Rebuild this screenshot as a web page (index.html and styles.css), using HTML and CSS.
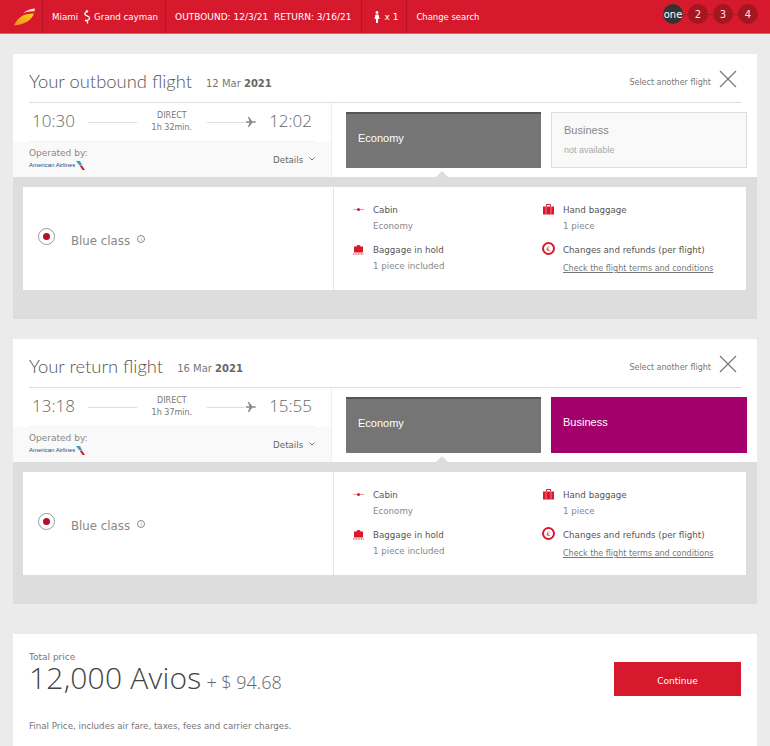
FILE: index.html
```html
<!DOCTYPE html>
<html lang="en">
<head>
    <meta charset="UTF-8">
    <meta name="viewport" content="width=device-width, initial-scale=1.0">
    <title>Select your flight</title>
    <link rel="stylesheet" href="styles.css">
</head>
<body>
    <div class="topbar">
        <div class="topbar-cell logo-cell">
            <svg width="22" height="18" viewBox="0 0 22 18">
                <defs>
                    <linearGradient id="wing" x1="0" y1="1" x2="1" y2="0">
                        <stop offset="0" stop-color="#f08a1d"/>
                        <stop offset="1" stop-color="#fcd116"/>
                    </linearGradient>
                </defs>
                <path d="M0 17.500C4 9 10 5.500 20 5.600C18 12 10 17 0 17.500Z" fill="url(#wing)"/>
                <path d="M9 5.500C12 2.500 16 .8 21 .5L20.500 3.400C16 3.200 12 4 9 5.500Z" fill="#fbe3d8"/>
            </svg>
        </div>
        <div class="topbar-cell route-cell">
            Miami
            <svg class="route-icon" width="8" height="14" viewBox="0 0 8 14">
                <path d="M3 .5L5 1.500C3 1.500 1.500 3 2 4.500C2.500 6 6.500 6 6.500 8C6.500 9.500 4.500 10.500 2 10.500M4.500 10V13.500" fill="none" stroke="#fff" stroke-width="1.300"/>
            </svg>
            Grand cayman
        </div>
        <div class="topbar-cell">OUTBOUND: 12/3/21&nbsp; RETURN: 3/16/21</div>
        <div class="topbar-cell pax-cell">
            <svg width="6" height="12" viewBox="0 0 6 12">
                <circle cx="3" cy="1.500" r="1.400" fill="#fff"/>
                <path d="M1.500 3.500H4.500L5.500 8H4V12H2V8H.5Z" fill="#fff"/>
            </svg>
            x 1
        </div>
        <div class="topbar-cell change-cell">Change search</div>
        <div class="steps">
            <span class="step step-active">one</span>
            <span class="step">2</span>
            <span class="step">3</span>
            <span class="step">4</span>
        </div>
    </div>

    <div class="content">
        <div class="flight-card">
            <div class="flight-title">
                <h2>Your outbound flight</h2>
                <span class="flight-date">12 Mar <b>2021</b></span>
                <span class="select-other">Select another flight</span>
                <svg class="close-icon" width="18" height="18" viewBox="0 0 18 18">
                    <path d="M1 1L17 17M17 1L1 17" stroke="#777" stroke-width="1.200"/>
                </svg>
            </div>
            <div class="flight-body">
                <div class="flight-info">
                    <div class="times">
                        <span class="time">10:30</span>
                        <span class="line"></span>
                        <span class="duration">DIRECT<br>1h 32min.</span>
                        <span class="line line-plane"></span>
                        <svg class="plane" width="10" height="10" viewBox="0 0 10 10">
                            <path d="M0 4.300H3.500L1.800 0H3L6.300 4.300H9C10.300 4.300 10.300 5.700 9 5.700H6.300L3 10H1.800L3.500 5.700H0Z" fill="#888"/>
                        </svg>
                        <span class="time time-end">12:02</span>
                    </div>
                    <div class="operated">
                        <div>
                            <div class="operated-label">Operated by:</div>
                            <div class="airline">American Airlines
                                <svg width="9" height="9" viewBox="0 0 9 9">
                                    <path d="M0 0L4 0L6 4L3 4Z" fill="#3a9bd5"/>
                                    <path d="M3.500 4.500H6L9 9H6.500Z" fill="#c8202f"/>
                                </svg>
                            </div>
                        </div>
                        <div class="details">Details
                            <svg width="6" height="4" viewBox="0 0 6 4">
                                <path d="M.5 .5L3 3L5.500 .5" fill="none" stroke="#777"/>
                            </svg>
                        </div>
                    </div>
                </div>
                <div class="cabins">
                    <div class="cabin cabin-selected">Economy</div>
                    <div class="cabin cabin-disabled">
                        <div>Business</div>
                        <div class="cabin-note">not available</div>
                    </div>
                </div>
            </div>
            <div class="fare-area">
                <div class="fare-panel">
                    <div class="fare-name">
                        <span class="radio"></span>
                        <span class="fare-label">Blue class</span>
                        <span class="info-dot">i</span>
                    </div>
                    <div class="fare-grid">
                        <div class="fare-item">
                            <svg class="fare-icon" width="11" height="11" viewBox="0 0 11 11">
                                <path d="M0 5H11V6H0Z" fill="#ef9aa3"/>
                                <circle cx="5.500" cy="5.500" r="1.500" fill="#d7192d"/>
                            </svg>
                            <div><div class="fare-head">Cabin</div><div class="fare-sub">Economy</div></div>
                        </div>
                        <div class="fare-item">
                            <svg class="fare-icon" width="11" height="11" viewBox="0 0 11 11">
                                <path d="M3.500 2.500V.5H7.500V2.500" fill="none" stroke="#d7192d"/>
                                <path d="M0 2.500H11V10.500H0Z" fill="#d7192d"/>
                                <path d="M3 2.500V10.500M8 2.500V10.500" stroke="#f4a3ab" stroke-width=".7"/>
                            </svg>
                            <div><div class="fare-head">Hand baggage</div><div class="fare-sub">1 piece</div></div>
                        </div>
                        <div class="fare-item">
                            <svg class="fare-icon" width="11" height="11" viewBox="0 0 11 11">
                                <path d="M3.500 2.500C3.500 .5 7.500 .5 7.500 2.500H10V8.500H1V2.500Z" fill="#d7192d"/>
                                <path d="M0 10H11" stroke="#d7192d" stroke-dasharray="1 .6"/>
                            </svg>
                            <div><div class="fare-head">Baggage in hold</div><div class="fare-sub">1 piece included</div></div>
                        </div>
                        <div class="fare-item">
                            <span class="euro-icon">€</span>
                            <div><div class="fare-head">Changes and refunds (per flight)</div><a class="fare-link" href="#">Check the flight terms and conditions</a></div>
                        </div>
                    </div>
                </div>
            </div>
        </div>

        <div class="flight-card">
            <div class="flight-title">
                <h2>Your return flight</h2>
                <span class="flight-date">16 Mar <b>2021</b></span>
                <span class="select-other">Select another flight</span>
                <svg class="close-icon" width="18" height="18" viewBox="0 0 18 18">
                    <path d="M1 1L17 17M17 1L1 17" stroke="#777" stroke-width="1.200"/>
                </svg>
            </div>
            <div class="flight-body">
                <div class="flight-info">
                    <div class="times">
                        <span class="time">13:18</span>
                        <span class="line"></span>
                        <span class="duration">DIRECT<br>1h 37min.</span>
                        <span class="line line-plane"></span>
                        <svg class="plane" width="10" height="10" viewBox="0 0 10 10">
                            <path d="M0 4.300H3.500L1.800 0H3L6.300 4.300H9C10.300 4.300 10.300 5.700 9 5.700H6.300L3 10H1.800L3.500 5.700H0Z" fill="#888"/>
                        </svg>
                        <span class="time time-end">15:55</span>
                    </div>
                    <div class="operated">
                        <div>
                            <div class="operated-label">Operated by:</div>
                            <div class="airline">American Airlines
                                <svg width="9" height="9" viewBox="0 0 9 9">
                                    <path d="M0 0L4 0L6 4L3 4Z" fill="#3a9bd5"/>
                                    <path d="M3.500 4.500H6L9 9H6.500Z" fill="#c8202f"/>
                                </svg>
                            </div>
                        </div>
                        <div class="details">Details
                            <svg width="6" height="4" viewBox="0 0 6 4">
                                <path d="M.5 .5L3 3L5.500 .5" fill="none" stroke="#777"/>
                            </svg>
                        </div>
                    </div>
                </div>
                <div class="cabins">
                    <div class="cabin cabin-selected">Economy</div>
                    <div class="cabin cabin-business">Business</div>
                </div>
            </div>
            <div class="fare-area">
                <div class="fare-panel">
                    <div class="fare-name">
                        <span class="radio"></span>
                        <span class="fare-label">Blue class</span>
                        <span class="info-dot">i</span>
                    </div>
                    <div class="fare-grid">
                        <div class="fare-item">
                            <svg class="fare-icon" width="11" height="11" viewBox="0 0 11 11">
                                <path d="M0 5H11V6H0Z" fill="#ef9aa3"/>
                                <circle cx="5.500" cy="5.500" r="1.500" fill="#d7192d"/>
                            </svg>
                            <div><div class="fare-head">Cabin</div><div class="fare-sub">Economy</div></div>
                        </div>
                        <div class="fare-item">
                            <svg class="fare-icon" width="11" height="11" viewBox="0 0 11 11">
                                <path d="M3.500 2.500V.5H7.500V2.500" fill="none" stroke="#d7192d"/>
                                <path d="M0 2.500H11V10.500H0Z" fill="#d7192d"/>
                                <path d="M3 2.500V10.500M8 2.500V10.500" stroke="#f4a3ab" stroke-width=".7"/>
                            </svg>
                            <div><div class="fare-head">Hand baggage</div><div class="fare-sub">1 piece</div></div>
                        </div>
                        <div class="fare-item">
                            <svg class="fare-icon" width="11" height="11" viewBox="0 0 11 11">
                                <path d="M3.500 2.500C3.500 .5 7.500 .5 7.500 2.500H10V8.500H1V2.500Z" fill="#d7192d"/>
                                <path d="M0 10H11" stroke="#d7192d" stroke-dasharray="1 .6"/>
                            </svg>
                            <div><div class="fare-head">Baggage in hold</div><div class="fare-sub">1 piece included</div></div>
                        </div>
                        <div class="fare-item">
                            <span class="euro-icon">€</span>
                            <div><div class="fare-head">Changes and refunds (per flight)</div><a class="fare-link" href="#">Check the flight terms and conditions</a></div>
                        </div>
                    </div>
                </div>
            </div>
        </div>

        <div class="total-card">
            <div class="total-row">
                <div>
                    <div class="total-label">Total price</div>
                    <div class="total-price">12,000 Avios <span class="total-extra">+ $ 94.68</span></div>
                </div>
                <button class="continue-btn">Continue</button>
            </div>
            <p class="total-note">Final Price, includes air fare, taxes, fees and carrier charges.</p>
        </div>
    </div>
</body>
</html>
```

FILE: styles.css
```css
body {
    margin: 0;
    height: 746px;
    overflow: hidden;
    background: #ebebeb;
    font-family: 'DejaVu Sans', Verdana, sans-serif;
    font-size: 8.700px;
    color: #777;
}

.topbar {
    display: flex;
    align-items: stretch;
    height: 33px;
    background: #d7192d;
    border-bottom: 1px solid #e0606c;
    color: #fff;
}

.topbar-cell {
    display: flex;
    align-items: center;
    gap: 5px;
    padding: 0 9px;
    border-right: 1px solid #b01525;
    white-space: nowrap;
    font-size: 9px;
}

.logo-cell {
    box-sizing: border-box;
    padding: 0 0 0 14px;
    width: 43px;
}

.route-cell {
    padding-right: 7px;
    font-size: 8.700px;
    gap: 3px;
}

.route-icon {
    margin-left: 2px;
}

.pax-cell {
    padding: 0 8px 0 12px;
    gap: 5px;
}

.change-cell {
    border-right: 0;
    font-size: 8.450px;
}

.steps {
    display: flex;
    align-items: center;
    gap: 5px;
    margin: 0 12px 5px auto;
    background: linear-gradient(#a5161f, #a5161f) center / 100% 1px no-repeat;
}

.step {
    display: flex;
    align-items: center;
    justify-content: center;
    width: 20px;
    height: 20px;
    border-radius: 50%;
    background: #a5161f;
    font-size: 10px;
    color: #fbe3e5;
}

.step-active {
    background: #333;
    color: #fff;
}

.content {
    padding: 20px 13px 0;
}

.flight-card {
    background: #fff;
    margin-bottom: 20px;
}

.flight-title {
    display: flex;
    align-items: center;
    box-sizing: border-box;
    height: 49px;
    padding-top: 6px;
    margin: 0 16px;
    border-bottom: 1px solid #ddd;
}

.flight-title h2 {
    margin: 0;
    font-family: Lato, sans-serif;
    font-size: 18.400px;
    font-weight: 300;
    color: #555;
}

.flight-date {
    margin-left: 14px;
    margin-top: 5px;
    font-size: 10px;
    color: #777;
}

.flight-date b {
    color: #666;
}

.select-other {
    margin-left: auto;
    margin-top: 2px;
    font-size: 8px;
    color: #777;
}

.close-icon {
    margin: -5px 4px 0 8px;
}

.flight-body {
    display: flex;
    height: 74px;
}

.flight-info {
    width: 319px;
    border-right: 1px solid #eee;
}

.times {
    display: flex;
    align-items: center;
    height: 38px;
    margin: 0 16px;
    border-bottom: 1px solid #f3f3f3;
}

.time {
    font-family: 'Open Sans', sans-serif;
    font-size: 17px;
    font-weight: 300;
    margin: 0 3px 4px;
    color: #666;
}

.time-end {
    margin-left: auto;
}

.line {
    flex: none;
    width: 49px;
    height: 1px;
    background: #ddd;
    margin-left: 10px;
}

.line-plane {
    width: 38px;
    margin-left: 0;
}

.duration {
    width: 70px;
    text-align: center;
    font-size: 8px;
    line-height: 12px;
    color: #777;
}

.plane {
    margin-left: 1px;
}

.operated {
    display: flex;
    justify-content: space-between;
    align-items: center;
    height: 35px;
    padding: 0 16px;
    background: #f9f9f9;
}

.operated-label {
    font-size: 9px;
    margin: -2px 0 3px;
    color: #888;
}

.airline {
    display: flex;
    align-items: center;
    gap: 1px;
    font-family: 'Liberation Sans', sans-serif;
    font-size: 6px;
    color: #2b4a7a;
}

.details {
    margin-top: 1px;
    color: #666;
}

.details svg {
    margin-left: 3px;
    vertical-align: 2px;
}

.cabins {
    display: flex;
    gap: 10px;
    padding: 9px 10px 9px 14px;
}

.cabin {
    position: relative;
    box-sizing: border-box;
    display: flex;
    align-items: center;
    width: 195px;
    height: 56px;
    padding: 0 12px;
    font-family: 'Liberation Sans', sans-serif;
    font-size: 11px;
    color: #fff;
}

.cabin-selected {
    padding-bottom: 7px;
    background: #757575;
    border-top: 2px solid #555;
}

.cabin-selected::after {
    content: '';
    position: absolute;
    left: 90px;
    bottom: -9px;
    border-left: 6px solid transparent;
    border-right: 6px solid transparent;
    border-bottom: 6px solid #ddd;
}

.cabin-disabled {
    display: block;
    width: 196px;
    background: #f9f9f9;
    border: 1px solid #ddd;
    color: #888;
    padding-top: 11px;
}

.cabin-note {
    margin-top: 9px;
    font-size: 9px;
    color: #aaa;
}

.cabin-business {
    width: 196px;
    padding-bottom: 6px;
    background: #a3006b;
}

.fare-area {
    height: 142px;
    box-sizing: border-box;
    padding: 10px 11px 10px 10px;
    background: #ddd;
}

.fare-panel {
    display: flex;
    height: 103px;
    background: #fff;
}

.fare-name {
    display: flex;
    align-items: center;
    box-sizing: border-box;
    width: 311px;
    border-right: 1px solid #e5e5e5;
    padding-left: 15px;
}

.radio {
    position: relative;
    box-sizing: border-box;
    width: 17px;
    height: 17px;
    border: 1px solid #999;
    border-radius: 50%;
    margin-top: -4px;
}

.radio::after {
    content: '';
    position: absolute;
    left: 4px;
    top: 4px;
    width: 7px;
    height: 7px;
    border-radius: 50%;
    background: #b5102a;
}

.fare-label {
    margin: 5px 0 0 16px;
    font-size: 11.800px;
    color: #888;
}

.info-dot {
    box-sizing: border-box;
    width: 8px;
    height: 8px;
    margin: 0 0 0 7px;
    border: 1px solid #888;
    border-radius: 50%;
    font-size: 5px;
    line-height: 6px;
    text-align: center;
}

.fare-grid {
    display: grid;
    grid-template-columns: 190px 1fr;
    grid-auto-rows: 40px;
    flex: 1;
    padding: 17px 0 0 19px;
}

.fare-item {
    display: flex;
    gap: 9px;
}

.fare-icon {
    flex: none;
}

.fare-head {
    height: 16px;
    line-height: 13px;
    color: #555;
}

.fare-sub {
    line-height: 13px;
    color: #888;
}

.fare-link {
    display: block;
    margin-top: 4px;
    font-size: 8px;
    color: #777;
}

.euro-icon {
    flex: none;
    box-sizing: border-box;
    width: 13px;
    height: 13px;
    margin: -2px -1px 0;
    border: 2px solid #d7192d;
    border-radius: 50%;
    font-size: 6px;
    line-height: 9px;
    text-align: center;
    color: #d7192d;
}

.total-card {
    margin-top: 30px;
    height: 120px;
    padding: 18px 16px 0;
    background: #fff;
}

.total-row {
    display: flex;
    justify-content: space-between;
    align-items: flex-start;
}

.total-label {
    font-size: 9px;
    color: #777;
}

.total-price {
    font-family: 'Open Sans', sans-serif;
    font-size: 30px;
    font-weight: 300;
    line-height: 32px;
    letter-spacing: .2px;
    color: #444;
}

.total-extra {
    margin-left: -3px;
    font-size: 18px;
    letter-spacing: 0;
    color: #666;
}

.continue-btn {
    width: 127px;
    height: 34px;
    margin-top: 10px;
    padding-top: 5px;
    border: 0;
    background: #d7192d;
    color: #fff;
    font-family: inherit;
    font-size: 9px;
}

.total-note {
    margin: 23px 0 0;
    color: #777;
}
```
